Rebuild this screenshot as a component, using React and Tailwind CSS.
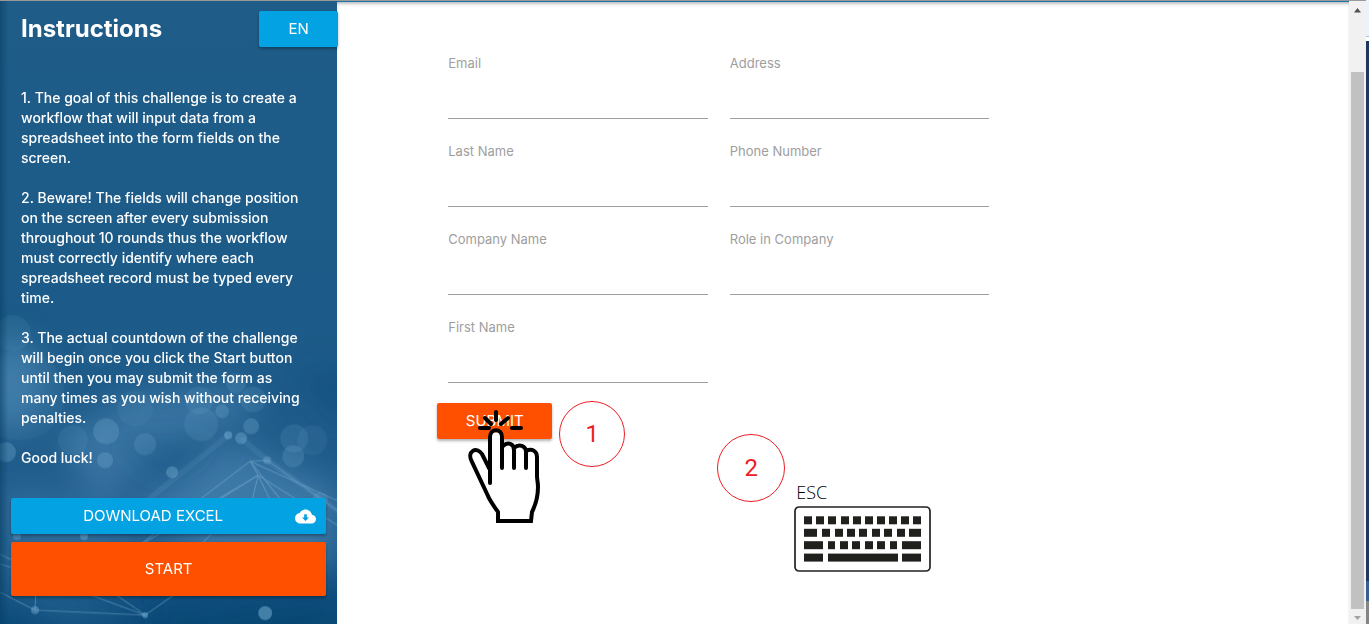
import React from "react";

const paragraphs = [
  "1. The goal of this challenge is to create a workflow that will input data from a spreadsheet into the form fields on the screen.",
  "2. Beware! The fields will change position on the screen after every submission throughout 10 rounds thus the workflow must correctly identify where each spreadsheet record must be typed every time.",
  "3. The actual countdown of the challenge will begin once you click the Start button until then you may submit the form as many times as you wish without receiving penalties.",
  "Good luck!",
];

const fields = [
  ["email", "Email"],
  ["address", "Address"],
  ["last-name", "Last Name"],
  ["phone", "Phone Number"],
  ["company", "Company Name"],
  ["role", "Role in Company"],
  ["first-name", "First Name"],
];

const bokeh = [
  [13, 333, 18, 0.1], [20, 395, 45, 0.06], [6, 452, 10, 0.28], [106, 431, 13, 0.24],
  [105, 460, 8, 0.26], [73, 440, 15, 0.1], [145, 444, 11, 0.18], [172, 472, 6, 0.36],
  [201, 424, 17, 0.13], [199, 400, 14, 0.12], [222, 411, 7, 0.22], [236, 383, 10, 0.16],
  [253, 399, 13, 0.14], [251, 426, 8, 0.26], [228, 435, 4, 0.42], [241, 438, 6, 0.34],
  [267, 460, 4, 0.32], [294, 438, 14, 0.14], [293, 456, 11, 0.2], [312, 440, 15, 0.09],
  [135, 408, 18, 0.08], [98, 352, 15, 0.05], [84, 536, 4, 0.4], [17, 536, 4, 0.3],
  [265, 613, 7, 0.48], [35, 610, 4, 0.4], [145, 615, 3, 0.5], [320, 500, 8, 0.18],
];

const threads = [
  "M250 461 135 548", "M250 461 345 504", "M250 461 284 504", "M250 461 267 460 345 516",
  "M258 475 135 548", "M258 475 170 530", "M258 475 272 504", "M258 475 251 504",
  "M250 461 258 475 345 530", "M0 592 35 610", "M35 610 36 590",
  "M145 615 88 594", "M145 615 112 592", "M145 615 178 592", "M145 615 35 610",
  "M0 554 20 564", "M0 564 20 570", "M215 530 195 550",
];

function Backdrop() {
  return (
    <svg
      className="absolute inset-0 h-full w-full"
      viewBox="0 0 337 624"
      preserveAspectRatio="none"
      aria-hidden="true"
    >
      <defs>
        <linearGradient id="base" x1="0" y1="0" x2="0" y2="1">
          <stop offset="0" stopColor="#1f5c88" />
          <stop offset=".5" stopColor="#1c5b89" />
          <stop offset=".8" stopColor="#225d8d" />
          <stop offset="1" stopColor="#0d4c7b" />
        </linearGradient>
        <linearGradient id="edge">
          <stop offset="0" stopColor="#083f60" stopOpacity=".55" />
          <stop offset="1" stopColor="#083f60" stopOpacity="0" />
        </linearGradient>
        <filter id="soft" x="-50%" y="-50%" width="200%" height="200%">
          <feGaussianBlur stdDeviation="16" />
        </filter>
      </defs>
      <path fill="url(#base)" d="M0 0h337v624H0z" />
      <g filter="url(#soft)" fill="#5f9bc7">
        <ellipse cx="12" cy="385" rx="35" ry="45" opacity=".45" />
        <path d="M60 440 130 395 230 385 260 410 190 440 100 500z" opacity=".4" />
        <path d="M225 440 337 490 337 570 210 560 130 510z" opacity=".45" />
        <path d="M0 490 110 500 150 560 0 590z" opacity=".25" />
        <path d="M0 580 100 600 145 612 60 624z" opacity=".25" />
      </g>
      <g filter="url(#soft)" fill="#003f6c">
        <path d="M110 440 220 440 160 480z" opacity=".3" />
        <path d="M150 615 337 600V640H150z" opacity=".5" />
        <path d="M290 370 350 370V440z" opacity=".35" />
      </g>
      <g fill="none" stroke="#9cc8e5" strokeWidth="1" opacity=".38">
        {threads.map((d) => (
          <path key={d} d={d} />
        ))}
      </g>
      <path d="M241 438 267 460 345 516M228 435 135 510" fill="none" stroke="#7fb2d6" strokeWidth="6" opacity=".13" />
      <g fill="#82b9db">
        {bokeh.map(([x, y, r, o]) => (
          <circle key={`${x}-${y}`} cx={x} cy={y} r={r} opacity={o} />
        ))}
      </g>
      <path fill="url(#edge)" d="M0 0h8v624H0z" />
    </svg>
  );
}

function PointingHand() {
  return (
    <svg
      className="pointer-events-none absolute left-[29px] top-[6px] h-[116px] w-[76px]"
      viewBox="0 0 76 116"
      fill="none"
      stroke="#000"
      strokeWidth="4"
      strokeLinecap="round"
      aria-hidden="true"
    >
      <path
        fill="#fff"
        stroke="none"
        d="M24 58V30c0-9 12-9 12 0v9c5-5 12-2 12 3 5-4 10-2 12 3 6-3 11 0 11 6v20c3 14 1 25-5 37v8H32v-9L5 57c-4-9 5-16 12-8l8 13z"
      />
      <path d="M30 3v8M19 9l6 6M42 9l-7 6M14 19h9M46 19h9" />
      <path d="M24 74V28c0-9 12-9 12 0v31M37 37c5-5 11-2 11 4v18M48 39c5-5 12-2 12 4v16M60 42c6-3 11 0 11 6v19c0 4 1 6 1 11 0 13-4 21-6 25l-1 9H32v-9c-4-6-8-11-10-16L6 53C0 42 11 37 16 45l7 14" />
    </svg>
  );
}

const keyRows = [
  [[0, 8], [12, 8], [24, 8], [37, 8], [49, 8], [61, 8], [73, 8], [85, 8], [97, 8], [109, 8]],
  [[0, 13], [18, 8], [31, 8], [43, 8], [55, 8], [68, 8], [80, 8], [93, 8], [105, 12]],
  [[0, 19], [24, 7], [36, 8], [48, 8], [61, 8], [73, 8], [86, 7], [98, 19]],
  [[0, 19], [24, 70], [98, 19]],
];

function Keyboard() {
  return (
    <svg className="h-[66px] w-[137px]" viewBox="0 0 137 66" role="img" aria-label="Keyboard">
      <rect x="1" y="1" width="135" height="64" rx="4" fill="#fff" stroke="#222320" strokeWidth="1.7" />
      {keyRows.map((row, r) =>
        row.map(([x, w]) => (
          <rect key={`${r}-${x}`} x={x + 10} y={[10.3, 22.8, 35.2, 47.6][r]} width={w} height="8" fill="#20211d" />
        ))
      )}
    </svg>
  );
}

function Scrollbar() {
  return (
    <div className="flex w-[17px] shrink-0 flex-col items-center border-t border-[#999] bg-[#f1f1f1] pt-[7px] pb-1" aria-hidden="true">
      <svg className="h-[5px] w-[7px]" viewBox="0 0 7 5"><path d="M3.5 0 7 4.5H0z" fill="#505050" /></svg>
      <div className="mt-[59px] w-[13px] flex-1 bg-[#c1c1c1]" />
      <svg className="mt-[7px] h-1 w-[7px]" viewBox="0 0 7 4"><path d="M0 0h7L3.5 4z" fill="#a3a3a3" /></svg>
    </div>
  );
}

const raised = "rounded-[2px] shadow-[0_2px_3px_rgba(0,0,0,0.3)]";

export default function App() {
  return (
    <div className="flex min-h-screen bg-white font-[Inter,sans-serif]">
      <div className="flex min-w-0 flex-1 border-t border-[#999]">
        <aside className="relative w-1/4 shrink-0 text-white">
          <Backdrop />
          <div className="relative">
            <header className="flex items-start justify-between pt-[10px] pl-[21px]">
              <h1 className="text-2xl leading-9 font-bold">Instructions</h1>
              <button className={`-mr-px h-9 w-[79px] bg-[#03a2e3] text-[15px] ${raised}`}>EN</button>
            </header>
            <div className="flex flex-col gap-5 pt-[41px] pr-[30px] pl-[21px] text-[14px] leading-5 font-medium">
              {paragraphs.map((text) => (
                <p key={text}>{text}</p>
              ))}
            </div>
            <div className="flex flex-col gap-2 pt-[30px] pr-[11px] pb-7 pl-[11px]">
              <a
                href="#download"
                className={`flex h-9 items-center bg-[#03a2e3] pr-[10px] text-[15px] ${raised}`}
              >
                <span className="flex-1 text-center">DOWNLOAD EXCEL</span>
                <svg className="h-[21px] w-[21px]" viewBox="0 0 24 24" fill="#fff" aria-hidden="true">
                  <path d="M19.35 10.04C18.67 6.59 15.64 4 12 4 9.11 4 6.6 5.64 5.35 8.04 2.34 8.36 0 10.91 0 14c0 3.31 2.69 6 6 6h13c2.76 0 5-2.24 5-5 0-2.64-2.05-4.78-4.65-4.96zM16 13l-4 4-4-4h2.500V9.500h3V13z" />
                </svg>
              </a>
              <button className={`h-[54px] bg-[#ff5000] text-[15px] ${raised}`}>START</button>
            </div>
          </div>
        </aside>

        <main className="min-w-0 flex-1 border-t border-[#1a76a8] pt-[50px] pl-[100px] shadow-[inset_0_3px_3px_-1px_rgba(0,0,0,0.25)]">
          <form className="w-full max-w-[563px]" onSubmit={(e) => e.preventDefault()}>
            <div className="grid grid-cols-2 gap-x-[22px] px-[11px]">
              {fields.map(([id, label]) => (
                <div key={id} className="h-[88px]">
                  <label htmlFor={id} className="block text-[13px] leading-[22px] text-[#9e9e9e]">{label}</label>
                  <input id={id} className="block h-[45px] w-full border-b border-[#9e9e9e] bg-transparent outline-none" />
                </div>
              ))}
            </div>
            <div className="relative -mt-px h-[170px]">
              <button className={`block h-9 w-[115px] bg-[#ff5000] text-[15px] text-white ${raised}`}>SUBMIT</button>
              <PointingHand />
              <div className="absolute top-[-2px] left-[122px] flex size-[66px] items-center justify-center rounded-full border border-[#ed1c24] font-[Roboto,sans-serif] text-2xl text-[#ed1c24]">
                1
              </div>
              <div className="absolute top-[31px] left-[280px] flex size-[68px] items-center justify-center rounded-full border border-[#ed1c24] font-[Roboto,sans-serif] text-2xl text-[#ed1c24]">
                2
              </div>
              <div className="absolute top-[77px] left-[357px] flex flex-col gap-0.5 font-['Open_Sans',sans-serif] text-[18px] leading-6 font-light text-black">
                <p className="pl-0.5">ESC</p>
                <Keyboard />
              </div>
            </div>
          </form>
        </main>
      </div>
      <Scrollbar />
      <div className="flex w-[3px] shrink-0 flex-col" aria-hidden="true">
        <div className="h-[37px] border-b border-[#a9c0dd] bg-[#eaf2fb]" />
        <div className="h-1 bg-white" />
        <div className="flex-1 bg-[#22355a]" />
        <div className="h-5 bg-[#3a5c92]" />
        <div className="h-[23px] bg-[#858585]" />
      </div>
    </div>
  );
}
